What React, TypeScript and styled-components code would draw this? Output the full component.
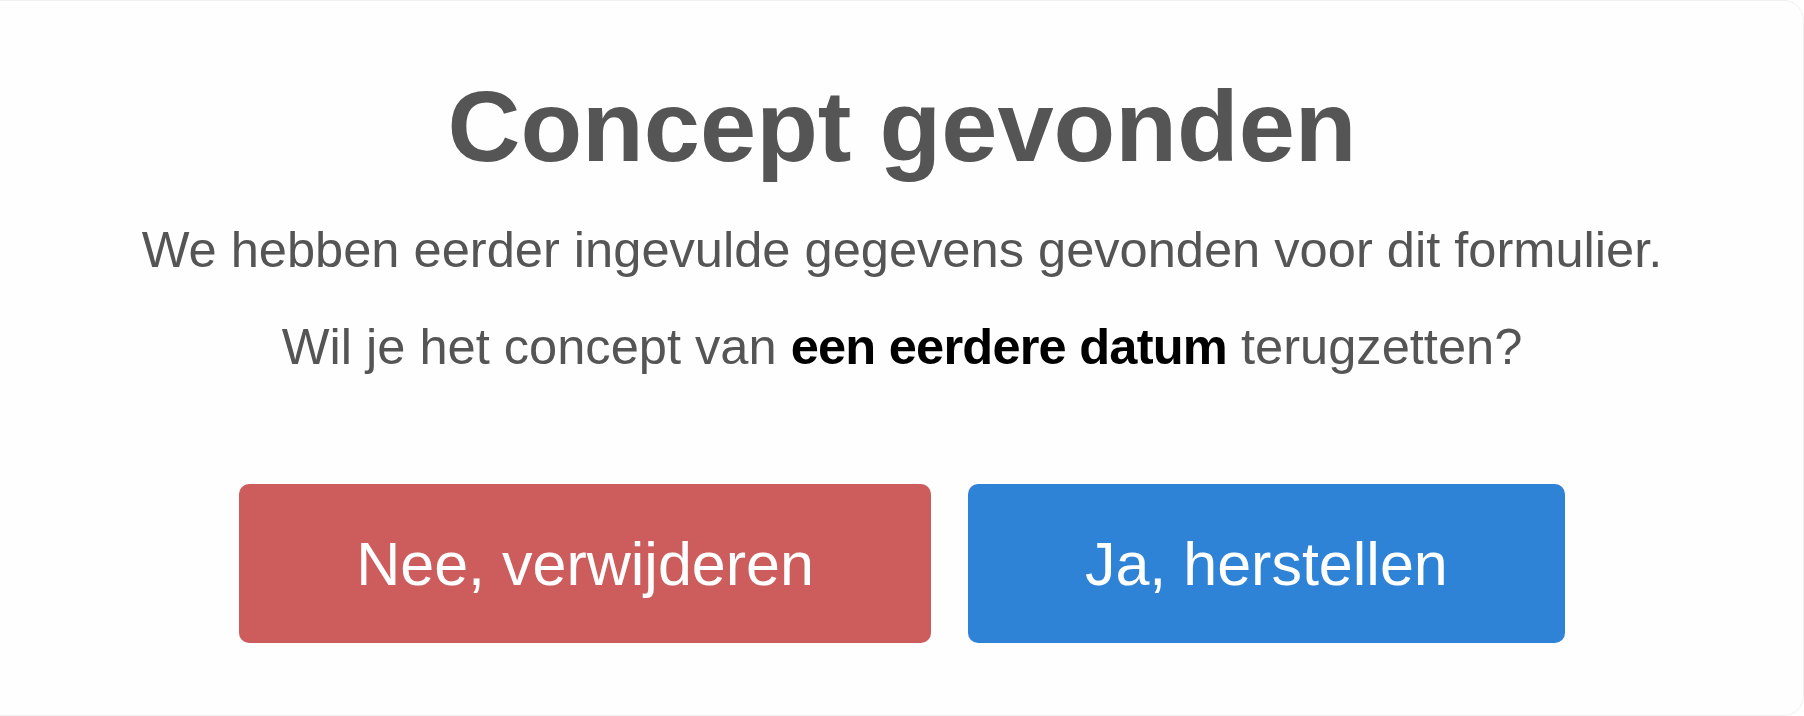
import styled, { createGlobalStyle } from "styled-components";

const GlobalStyle = createGlobalStyle`
  html, body {
    margin: 0;
    padding: 0;
    background: #ffffff;
  }
  body {
    font-family: "Liberation Sans", Arial, sans-serif;
    overflow: hidden;
  }
`;

export default function App() {
  const handleDiscard = () => {
    console.log("discard draft");
  };

  const handleRestore = () => {
    console.log("restore draft");
  };

  return (
    <>
      <GlobalStyle />
      <Card>
        <Title>Concept gevonden</Title>
        <Text>We hebben eerder ingevulde gegevens gevonden voor dit formulier.</Text>
        <Question>
          Wil je het concept van <Strong>een eerdere datum</Strong> terugzetten?
        </Question>
        <Actions>
          <Button $variant="danger" onClick={handleDiscard}>
            Nee, verwijderen
          </Button>
          <Button $variant="primary" onClick={handleRestore}>
            Ja, herstellen
          </Button>
        </Actions>
      </Card>
    </>
  );
}

const Card = styled.div`
  box-sizing: border-box;
  width: calc(100% + 20px);
  height: 716px;
  margin-left: -20px;
  padding-top: 75px;
  padding-left: 20px;
  display: flex;
  flex-direction: column;
  align-items: center;
  background: #fefefe;
  border: 1px solid #f0f0f0;
  border-radius: 20px;
`;

const Title = styled.h1`
  margin: 0 0 48px;
  font-size: 101px;
  line-height: 1;
  font-weight: bold;
  color: #555555;
`;

const Text = styled.p`
  margin: 0;
  font-size: 50.6px;
  line-height: 1;
  color: #555555;
`;

const Question = styled(Text)`
  margin-top: 46px;
`;

const Strong = styled.strong`
  color: #000000;
  font-weight: bold;
  letter-spacing: -0.8px;
`;

const Actions = styled.div`
  display: flex;
  gap: 37px;
  margin-top: 112px;
`;

const Button = styled.button<{ $variant: "danger" | "primary" }>`
  height: 159px;
  padding: 0 117px;
  display: flex;
  align-items: center;
  justify-content: center;
  border: none;
  border-radius: 10px;
  font-family: "Liberation Sans", Arial, sans-serif;
  font-size: 61px;
  color: #ffffff;
  cursor: pointer;
  background-color: ${(p) => (p.$variant === "danger" ? "#cd5c5c" : "#2e83d6")};
`;
